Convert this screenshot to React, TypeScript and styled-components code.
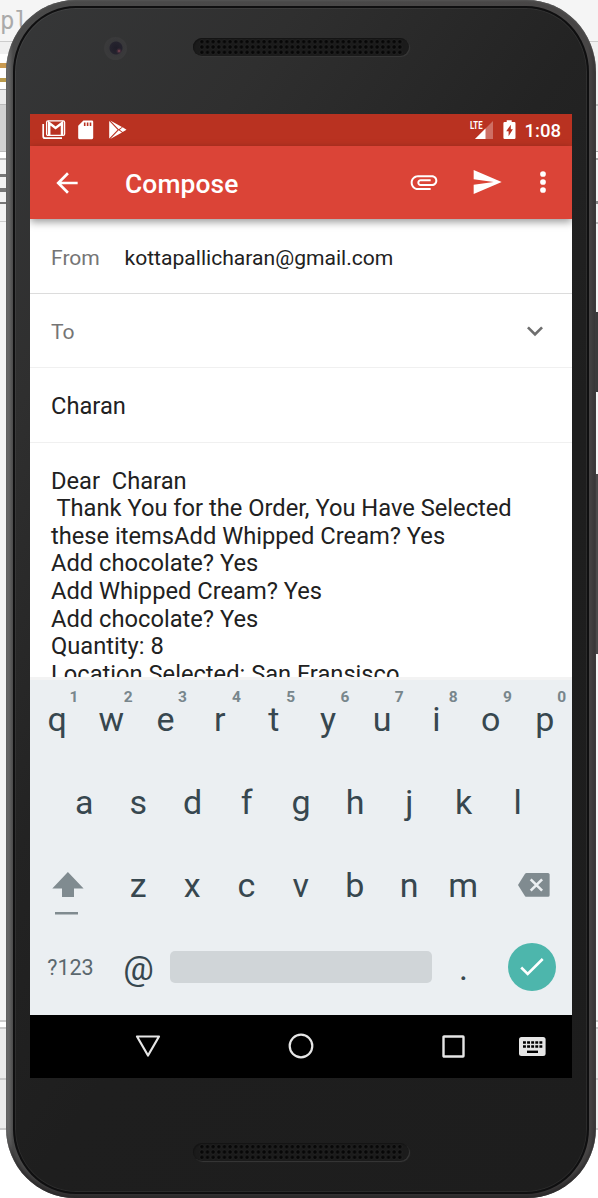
import React from "react";
import styled, { createGlobalStyle } from "styled-components";

const Global = createGlobalStyle`
  * { box-sizing: border-box; }
  html, body { margin: 0; padding: 0; overflow: hidden; background: #fff; }
  body { font-family: Roboto, "Noto Sans", sans-serif; }
  svg { display: block; overflow: visible; }
`;

const Stage = styled.div`
  display: grid;
  grid-template: 1198px / 598px;
  width: 598px;
  height: 1198px;
  overflow: hidden;
  background: #fff;
  > * { grid-area: 1 / 1; }
`;

/* The windows on the desktop that peek out behind the device */
const Desktop = styled.div`
  display: flex;
  justify-content: space-between;
`;
const Strip = styled.div<{ $w: number }>`
  width: ${(p) => p.$w}px;
  display: flex;
  flex-direction: column;
`;
const Band = styled.div<{ $h: number; $c: string }>`
  flex: none;
  height: ${(p) => p.$h}px;
  background: ${(p) => p.$c};
  color: #aaa;
  font: 24px/43px "DejaVu Sans Mono", monospace;
`;

const Phone = styled.div`
  margin: 0 2px 0 6px;
  width: 590px;
  height: 1198px;
  padding: 6px 7px 4px 7px;
  border-radius: 69px / 72px 72px 70px 70px;
  background: linear-gradient(90deg, #777 0, #666 3px, #4a4a4a 7px, #484646 582px, #383536 590px);
  box-shadow: inset 0 1px 2px #555, inset 0 -7px 5px -2px #2b292a;
  overflow: hidden;
`;
const Face = styled.div`
  height: 100%;
  display: flex;
  flex-direction: column;
  align-items: center;
  border: 2px solid #0f0f10;
  border-radius: 63px / 66px 66px 65px 65px;
  box-shadow: inset 0 0 0 1px rgba(255, 255, 255, 0.06);
  background: linear-gradient(125deg, #363738 0, #2f2f2f 20%, #232323 42%, #1e1e1e 60%, #1d1d1d 100%);
`;
const Forehead = styled.div`
  flex: none;
  width: 542px;
  height: 106px;
  display: flex;
  align-items: flex-start;
  padding-top: 30px;
`;
const Camera = styled.div`
  width: 23px;
  height: 23px;
  margin: -1px 66px 0 74px;
  border-radius: 50%;
  background: radial-gradient(circle at 15px 14px, #8a4c58 0, rgba(80, 48, 62, 0.7) 1.5px, transparent 3px),
    radial-gradient(circle at 12px 11px, #1f1d28 0, #25232e 6px, #38383a 7px, #3a3a3b 11px);
`;
const Speaker = styled.div`
  width: 216px;
  height: 18px;
  padding: 1px 6px;
  border-radius: 9px;
  background: #1b1b1b;
  box-shadow: 1px 1px 1px #383838, inset 1px 1px 1px #141414;
`;
const Mesh = styled.div`
  height: 16px;
  background: radial-gradient(circle at 50% 50%, #050505 0, #080808 1.3px, #212121 2.1px, transparent 2.8px);
  background-size: 5.67px 5.33px;
`;
const Chin = styled.div`
  flex: 1;
  padding-top: 65px;
`;

const Screen = styled.div`
  flex: none;
  width: 542px;
  height: 964px;
  display: flex;
  flex-direction: column;
  background: #fff;
  overflow: hidden;
`;
const StatusBar = styled.div`
  flex: none;
  height: 32px;
  display: flex;
  align-items: center;
  padding: 0 11px 0 12px;
  background: #b93221;
  color: #fff;
`;
const Clock = styled.span`
  margin-left: 9px;
  font-size: 18.5px;
  font-weight: 500;
  line-height: 32px;
  padding-top: 1px;
`;
const Grow = styled.div`
  flex: 1;
`;
const AppBar = styled.div`
  flex: none;
  z-index: 1;
  height: 73px;
  display: flex;
  align-items: center;
  padding-left: 21px;
  background: #db4437;
  color: #fff;
  box-shadow: 0 3px 8px rgba(0, 0, 0, 0.4);
`;
const Title = styled.h1`
  flex: 1;
  margin: 2px 0 0 42px;
  font-size: 26.4px;
  letter-spacing: 0.12px;
  font-weight: 500;
  line-height: 32px;
`;
const Field = styled.div<{ $h: number; $line: string; $size?: number; $y?: number }>`
  flex: none;
  height: ${(p) => p.$h}px;
  display: flex;
  align-items: center;
  padding: ${(p) => p.$y ?? 3}px 21px 0;
  border-bottom: 1px solid ${(p) => p.$line};
  font-size: ${(p) => p.$size ?? 23.7}px;
  color: #212121;
`;
const Label = styled.span`
  width: 73.5px;
  color: #757575;
`;
const Value = styled.span`
  flex: 1;
`;
const Message = styled.div`
  height: 234px;
  flex: none;
  padding: 24.6px 21px 0;
  overflow: hidden;
  white-space: pre;
  font-size: 23.7px;
  line-height: 27.6px;
  color: #212121;
`;
const KeyboardShade = styled.div`
  flex: none;
  height: 3px;
  background: #f3f3f3;
`;

const Keyboard = styled.div`
  flex: none;
  height: 335px;
  background: #ebeff2;
  color: #37474f;
`;
const KeyRow = styled.div<{ $inset?: number; $h?: number }>`
  display: flex;
  height: ${(p) => p.$h ?? 83}px;
  padding: 0 ${(p) => p.$inset ?? 0}px;
`;
const Key = styled.div<{ $w?: number; $size?: number; $left?: number; $muted?: boolean }>`
  position: relative;
  flex: none;
  width: ${(p) => p.$w ?? 54.2}px;
  height: 77px;
  display: flex;
  align-items: center;
  justify-content: center;
  padding-left: ${(p) => p.$left ?? 0}px;
  font-size: ${(p) => p.$size ?? 34}px;
  line-height: 76px;
  color: ${(p) => (p.$muted ? "#5b686e" : "inherit")};
`;
const Hint = styled.sup`
  position: absolute;
  top: 8px;
  left: 27px;
  width: 34px;
  text-align: center;
  font-size: 15.5px;
  font-weight: 700;
  line-height: 18px;
  color: #78868c;
`;
const ShiftKey = styled.div`
  width: 81px;
  padding: 26px 0 0 22px;
`;
const SpaceKey = styled.div`
  flex: none;
  width: 262px;
  height: 32px;
  margin-top: 22px;
  border-radius: 5px;
  background: #d0d5d8;
`;
const DoneKey = styled.div`
  flex: none;
  width: 48px;
  height: 48px;
  margin: 14px 16.5px 0 0;
  border-radius: 50%;
  background: #4db6ac;
`;
const NavBar = styled.div`
  flex: 1;
  display: flex;
  align-items: center;
  background: #000;
  padding: 0 0 1px 105px;
`;

const MailIcon = () => (
  <svg width="24" height="20" viewBox="0 0 24 20" fill="none" stroke="#fff">
    <path d="M1.2 4v12.2q0 2 2 2H20" strokeWidth="1.7" />
    <rect x="4.6" y="0.8" width="18" height="14.6" rx="1.5" strokeWidth="1.3" />
    <path d="M7.2 15V3l6.400 5L20 3v12" strokeWidth="2.500" />
  </svg>
);
const SdIcon = () => (
  <svg width="16" height="20" viewBox="0 0 16 20">
    <path d="M5.400.500h8.500q1.300 0 1.300 1.300v16q0 1.400-1.300 1.400H1.400Q.200 19.200.200 17.800V5.700z" fill="#fff" />
    <path d="M6.700 2.500v3.600M9.600 2.500v3.600M12.500 2.500v3.600" stroke="#b93221" strokeWidth="1.600" />
  </svg>
);
const PlayIcon = () => (
  <svg width="18" height="20" viewBox="0 0 18 20">
    <path d="M.200 1v17.400L8.600 9.700z M1.200.500 13 7l-3.300 2.300z M1.200 19l11.800-6.600-3.300-2.200z M13.700 7.300l3.800 2.400-3.800 2.400-3-2.400z" fill="#fff" />
  </svg>
);
const SignalIcon = () => (
  <svg width="23" height="20" viewBox="0 0 23 20">
    <path d="M23 1v18H5z" fill="#fff" opacity=".3" />
    <path d="M15.500 8.500V19H5z" fill="#fff" />
    <text x="0" y="9" fontFamily="Roboto, sans-serif" fontSize="11.500" fontWeight="700" fill="#fff" textLength="12.500" lengthAdjust="spacingAndGlyphs">LTE</text>
  </svg>
);
const BatteryIcon = () => (
  <svg width="13" height="20" viewBox="0 0 13 20">
    <path d="M3.700 2V.300h5V2h2.600q1.200 0 1.200 1.200v14.600q0 1.200-1.200 1.200H1.600Q.400 19 .400 17.800V3.200Q.400 2 1.600 2z" fill="#fff" />
    <path d="M7.800 4.700v4.500h2.100L5.600 16.300v-5H3.200z" fill="#b93221" />
  </svg>
);
const BackIcon = () => (
  <svg width="32" height="32" viewBox="0 0 24 24" fill="#fff">
    <path d="M20 11H7.830l5.590-5.590L12 4l-8 8 8 8 1.410-1.410L7.830 13H20v-2z" />
  </svg>
);
const ClipIcon = () => (
  <svg width="32" height="32" viewBox="0 0 24 24" fill="#fff">
    <path d="M2 12.500C2 9.460 4.460 7 7.500 7H18c2.210 0 4 1.790 4 4s-1.790 4-4 4H9.500C8.120 15 7 13.880 7 12.500S8.120 10 9.500 10H17v1.500H9.410c-.55 0-.910.450-.910 1s.360 1 .910 1H18c1.380 0 2.500-1.120 2.500-2.500S19.380 8.500 18 8.500H7.500c-2.210 0-4 1.790-4 4s1.790 4 4 4H17V18H7.500C4.460 18 2 15.540 2 12.500z" />
  </svg>
);
const SendIcon = () => (
  <svg width="32" height="32" viewBox="0 0 24 24" fill="#fff">
    <path d="M2.010 21 23 12 2.010 3 2 10l15 2-15 2z" />
  </svg>
);
const MoreIcon = () => (
  <svg width="32" height="32" viewBox="0 0 24 24" fill="#fff">
    <circle cx="12" cy="6" r="2.150" /><circle cx="12" cy="12" r="2.150" /><circle cx="12" cy="18" r="2.150" />
  </svg>
);
const Tool = styled.div<{ $gap: number }>`
  margin: 0 ${(p) => p.$gap}px 1px 0;
`;
const StatusIcon = styled.div<{ $gap: number }>`
  margin-right: ${(p) => p.$gap}px;
`;
const NavItem = styled.div<{ $gap: number }>`
  margin-right: ${(p) => p.$gap}px;
`;

const leftBands: [number, string, string?][] = [
  [41, "#f5f5f5", "pl"], [1, "#ccc"], [12, "#f0f0f0"], [9, "#fff"], [5, "#c99a50"], [10, "#fff"],
  [4, "#b99a4c"], [7, "#fff"], [1, "#aaa"], [14, "#ececec"], [1, "#bbb"], [46, "#d2d2d2"],
  [1, "#bbb"], [6, "#fff"], [2, "#bbb"], [14, "#f3f3f3"], [3, "#777"], [11, "#f3f3f3"],
  [4, "#777"], [10, "#f3f3f3"], [2, "#777"], [17, "#f3f3f3"], [1, "#ccc"], [798, "#f5f5f5"],
  [2, "#ccc"], [5, "#fff"], [2, "#ccc"], [49, "#ececec"], [2, "#ccc"], [48, "#ececec"], [2, "#ccc"], [68, "#fff"],
];
const rightBands: [number, string][] = [
  [41, "#f5f5f5"], [1, "#ccc"], [62, "#f0f0f0"], [2, "#c4c4c4"], [45, "#ececec"], [1, "#aaa"], [6, "#fff"],
  [2, "#aaa"], [41, "#f3f3f3"], [3, "#888"], [18, "#f3f3f3"], [2, "#bbb"], [88, "#f5f5f5"], [80, "#3c3b3c"],
  [82, "#f5f5f5"], [180, "#4b494a"], [366, "#f5f5f5"], [2, "#ccc"], [5, "#fff"], [2, "#ccc"],
  [49, "#ececec"], [2, "#ccc"], [48, "#ececec"], [2, "#ccc"], [68, "#fff"],
];
const message = `Dear  Charan
 Thank You for the Order, You Have Selected
these itemsAdd Whipped Cream? Yes
Add chocolate? Yes
Add Whipped Cream? Yes
Add chocolate? Yes
Quantity: 8
Location Selected: San Fransisco`;

export default function App() {
  return (
    <>
      <Global />
      <Stage>
        <Desktop>
          <Strip $w={60}>
            {leftBands.map(([h, c, t], i) => <Band key={i} $h={h} $c={c}>{t}</Band>)}
          </Strip>
          <Strip $w={60}>
            {rightBands.map(([h, c], i) => <Band key={i} $h={h} $c={c} />)}
          </Strip>
        </Desktop>
        <Phone>
          <Face>
            <Forehead>
              <Camera />
              <Speaker><Mesh /></Speaker>
            </Forehead>
            <Screen>
              <StatusBar>
                <StatusIcon $gap={12}><MailIcon /></StatusIcon>
                <StatusIcon $gap={15}><SdIcon /></StatusIcon>
                <PlayIcon />
                <Grow />
                <StatusIcon $gap={10}><SignalIcon /></StatusIcon>
                <BatteryIcon />
                <Clock>1:08</Clock>
              </StatusBar>
              <AppBar>
                <BackIcon />
                <Title>Compose</Title>
                <Tool $gap={31}><ClipIcon /></Tool>
                <Tool $gap={24}><SendIcon /></Tool>
                <Tool $gap={13}><MoreIcon /></Tool>
              </AppBar>
              <Field $h={75} $line="#dcdcdc" $size={21.1}>
                <Label>From</Label>
                <Value>kottapallicharan@gmail.com</Value>
              </Field>
              <Field $h={74} $line="#f0f0f0" $size={21.1} $y={2}>
                <Label>To</Label>
                <Grow />
                <svg width="32" height="32" viewBox="0 0 24 24" fill="#6e6e6e">
                  <path d="M7.410 7.840 12 12.420l4.590-4.580L18 9.250l-6 6-6-6z" />
                </svg>
              </Field>
              <Field $h={75} $line="#f0f0f0" $y={1}><Value>Charan</Value></Field>
              <Message>{message}</Message>
              <KeyboardShade />
              <Keyboard>
                <KeyRow>
                  {[..."qwertyuiop"].map((k, i) => (
                    <Key key={k}>{k}<Hint>{(i + 1) % 10}</Hint></Key>
                  ))}
                </KeyRow>
                <KeyRow $inset={27.1}>
                  {[..."asdfghjkl"].map((k) => <Key key={k}>{k}</Key>)}
                </KeyRow>
                <KeyRow>
                  <ShiftKey>
                    <svg width="32" height="44" viewBox="0 0 32 44" fill="#808b90">
                      <path d="M15.900 0 31.600 16.500H22V25H10v-8.500H.300z" />
                      <path d="M3 40h23v2.500H3z" />
                    </svg>
                  </ShiftKey>
                  {[..."zxcvbnm"].map((k) => <Key key={k}>{k}</Key>)}
                  <Key $w={81} $left={7}>
                    <svg width="32" height="24" viewBox="0 0 32 24">
                      <path d="M8.500 0H30q1.600 0 1.600 1.600v20.600q0 1.600-1.600 1.600H8.500q-1 0-1.600-.900L0 12 6.900.900Q7.500 0 8.500 0z" fill="#808b90" />
                      <path d="m12.700 6.300 11.400 11.400m0-11.400L12.700 17.700" stroke="#ebeff2" strokeWidth="2.600" />
                    </svg>
                  </Key>
                </KeyRow>
                <KeyRow $h={86}>
                  <Key $w={81} $size={21.5} $muted>?123</Key>
                  <Key $w={59} $left={0}>
                    <AtSign>@</AtSign>
                  </Key>
                  <SpaceKey />
                  <Key $w={63}>.</Key>
                  <Grow />
                  <DoneKey>
                    <svg width="48" height="48" viewBox="0 0 48 48" fill="none" stroke="#fff" strokeWidth="2.600">
                      <path d="m13.200 24.500 6.500 6.500 15-15" />
                    </svg>
                  </DoneKey>
                </KeyRow>
              </Keyboard>
              <NavBar>
                <NavItem $gap={127}>
                  <svg width="26" height="24" viewBox="0 0 26 24" fill="none" stroke="#e6e6e6" strokeWidth="2.200" strokeLinejoin="round">
                    <path d="M2 2.500h22L13 21.500z" />
                  </svg>
                </NavItem>
                <NavItem $gap={128}>
                  <svg width="26" height="26" viewBox="0 0 26 26" fill="none" stroke="#e6e6e6" strokeWidth="2.200">
                    <circle cx="13" cy="13" r="11.300" />
                  </svg>
                </NavItem>
                <NavItem $gap={54}>
                  <svg width="23" height="23" viewBox="0 0 23 23" fill="none" stroke="#e6e6e6" strokeWidth="2.400">
                    <rect x="1.500" y="1.500" width="20" height="20" rx="0.500" />
                  </svg>
                </NavItem>
                <svg width="27" height="19" viewBox="0 0 27 19">
                  <rect width="26.600" height="19" rx="2.500" fill="#e6e6e6" />
                  <path d="M4 5.500h19.300M4 9.500h19.300" stroke="#000" strokeWidth="2.700" strokeDasharray="2.900 1.200" />
                  <path d="M8 14.800h11" stroke="#000" strokeWidth="2.400" />
                </svg>
              </NavBar>
            </Screen>
            <Chin><Speaker><Mesh /></Speaker></Chin>
          </Face>
        </Phone>
      </Stage>
    </>
  );
}

const AtSign = styled.span`
  margin-right: 4px;
`;
